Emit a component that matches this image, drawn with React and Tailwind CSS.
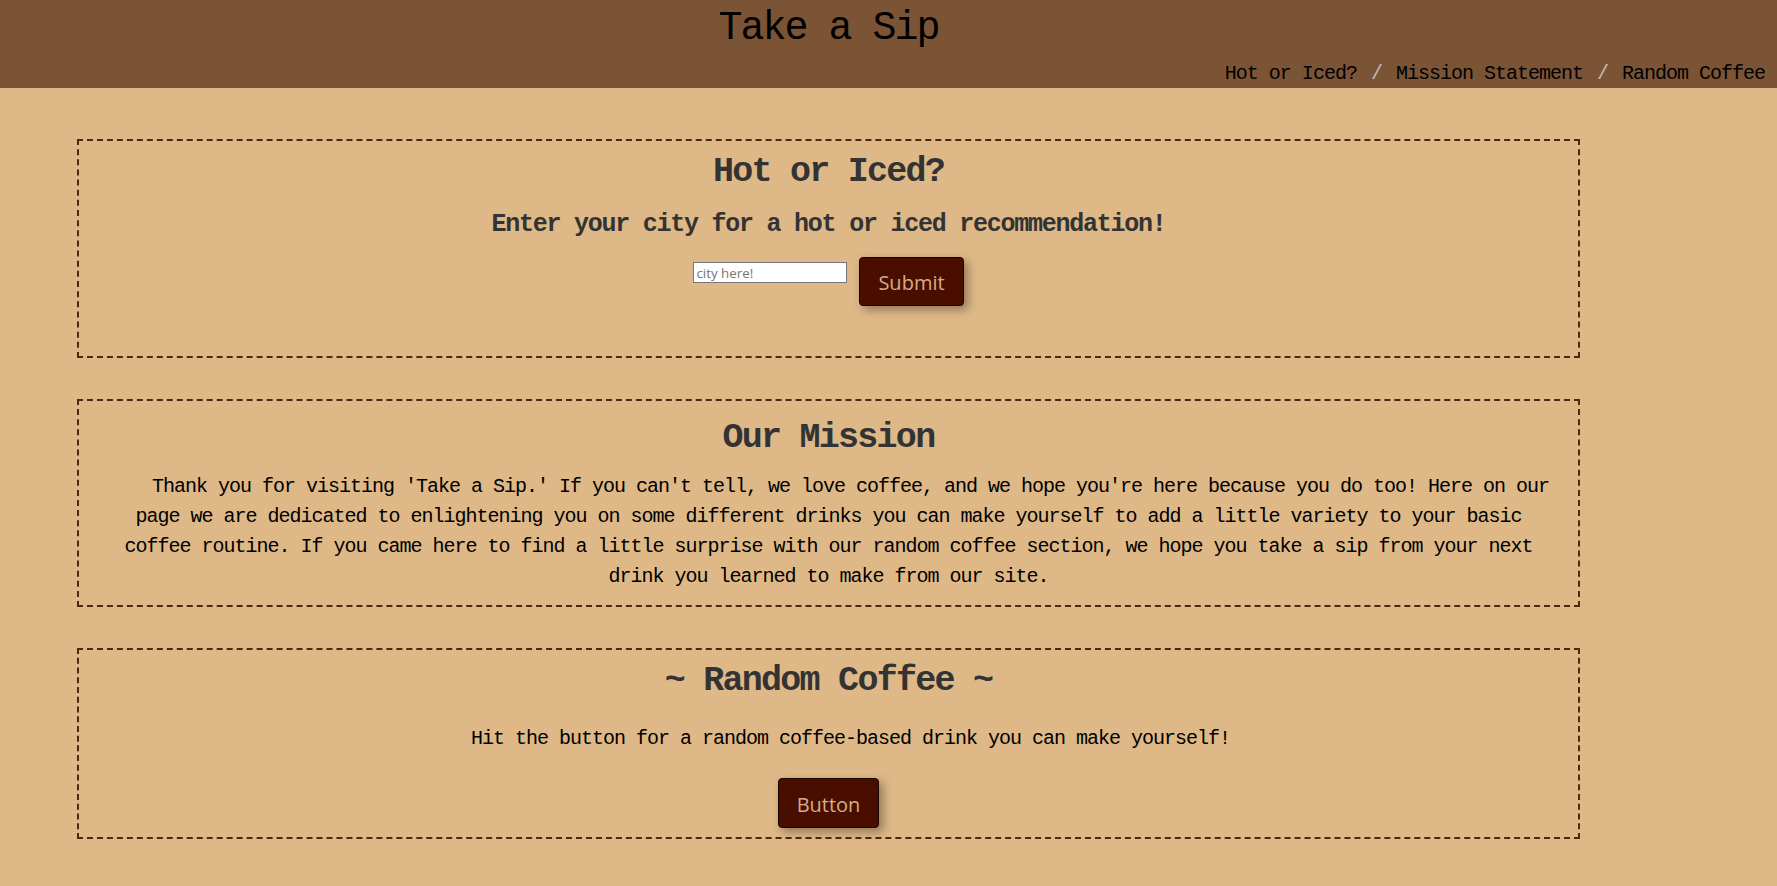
import React, { useState } from "react";

const mono = "font-['Liberation_Mono','DejaVu_Sans_Mono',monospace] tracking-[-0.05em]";

const NavLinks = () => {
  const links = ["Hot or Iced?", "Mission Statement", "Random Coffee"];
  return (
    <nav className={`flex justify-end pr-[12px] mt-[9px] text-[20px] leading-[24px] text-black ${mono}`}>
      {links.map((link, i) => (
        <span key={i} className="flex">
          {i > 0 && <span className="mx-[14px] text-[#c4bbb2]">/</span>}
          <a href="#" className="whitespace-pre">
            {link}
          </a>
        </span>
      ))}
    </nav>
  );
};

const CoffeeButton = ({ text, onClick, height = "h-[49px]" }) => {
  return (
    <button
      onClick={onClick}
      className={`${height} px-[18px] pt-[3px] rounded-[4px] border border-[#1a0500] bg-[#4a0e00] text-[#d4ae85] text-[20px] font-['Open_Sans','Noto_Sans',sans-serif] shadow-[4px_4px_10px_rgba(0,0,0,0.35)]`}
    >
      {text}
    </button>
  );
};

const App = () => {
  const [city, setCity] = useState("");

  return (
    <div className="min-h-[886px] w-full bg-[#deb887]">
      <header className="h-[88px] bg-[#7b5436] pt-[5px]">
        <div className="ml-[77px] w-[1503px] text-center">
          <h1 className={`text-[40px] leading-[48px] text-black ${mono}`}>Take a Sip</h1>
        </div>
        <NavLinks />
      </header>

      <main className="ml-[77px] w-[1503px] pt-[51px] pb-[46px] flex flex-col gap-[41px]">
        <section className="border-2 border-dashed border-[#4b2a12] pt-[10px] pb-[50px] text-center">
          <h2 className={`text-[35px] leading-[42px] font-bold text-[#333] ${mono}`}>Hot or Iced?</h2>
          <h3 className={`mt-[17px] text-[25px] leading-[30px] font-bold text-[#333] ${mono}`}>
            Enter your city for a hot or iced recommendation!
          </h3>
          <div className="mt-[17px] flex justify-center items-start gap-[12px]">
            <input
              type="text"
              value={city}
              onChange={(e) => setCity(e.target.value)}
              placeholder="city here!"
              className="mt-[5px] w-[154px] h-[21px] border border-[#767676] bg-white px-[2px] text-[13.333px] font-['Open_Sans','Noto_Sans',sans-serif] text-black placeholder:text-[#757575] outline-none"
            />
            <CoffeeButton text="Submit" />
          </div>
        </section>

        <section className="border-2 border-dashed border-[#4b2a12] pt-[16px] pb-[13px] text-center">
          <h2 className={`text-[35px] leading-[42px] font-bold text-[#333] ${mono}`}>Our Mission</h2>
          <p className={`mt-[13px] px-[25px] indent-[44px] text-[20px] leading-[30px] text-black ${mono}`}>
            Thank you for visiting 'Take a Sip.' If you can't tell, we love coffee, and we hope you're here
            because you do too! Here on our page we are dedicated to enlightening you on some different drinks
            you can make yourself to add a little variety to your basic coffee routine. If you came here to find
            a little surprise with our random coffee section, we hope you take a sip from your next drink you
            learned to make from our site.
          </p>
        </section>

        <section className="border-2 border-dashed border-[#4b2a12] pt-[10px] pb-[9px] text-center">
          <h2 className={`text-[35px] leading-[42px] font-bold text-[#333] ${mono}`}>~ Random Coffee ~</h2>
          <p className={`mt-[22px] px-[25px] indent-[44px] text-[20px] leading-[30px] text-black ${mono}`}>
            Hit the button for a random coffee-based drink you can make yourself!
          </p>
          <div className="mt-[24px] flex justify-center">
            <CoffeeButton text="Button" height="h-[50px]" />
          </div>
        </section>
      </main>
    </div>
  );
};

export default App;
